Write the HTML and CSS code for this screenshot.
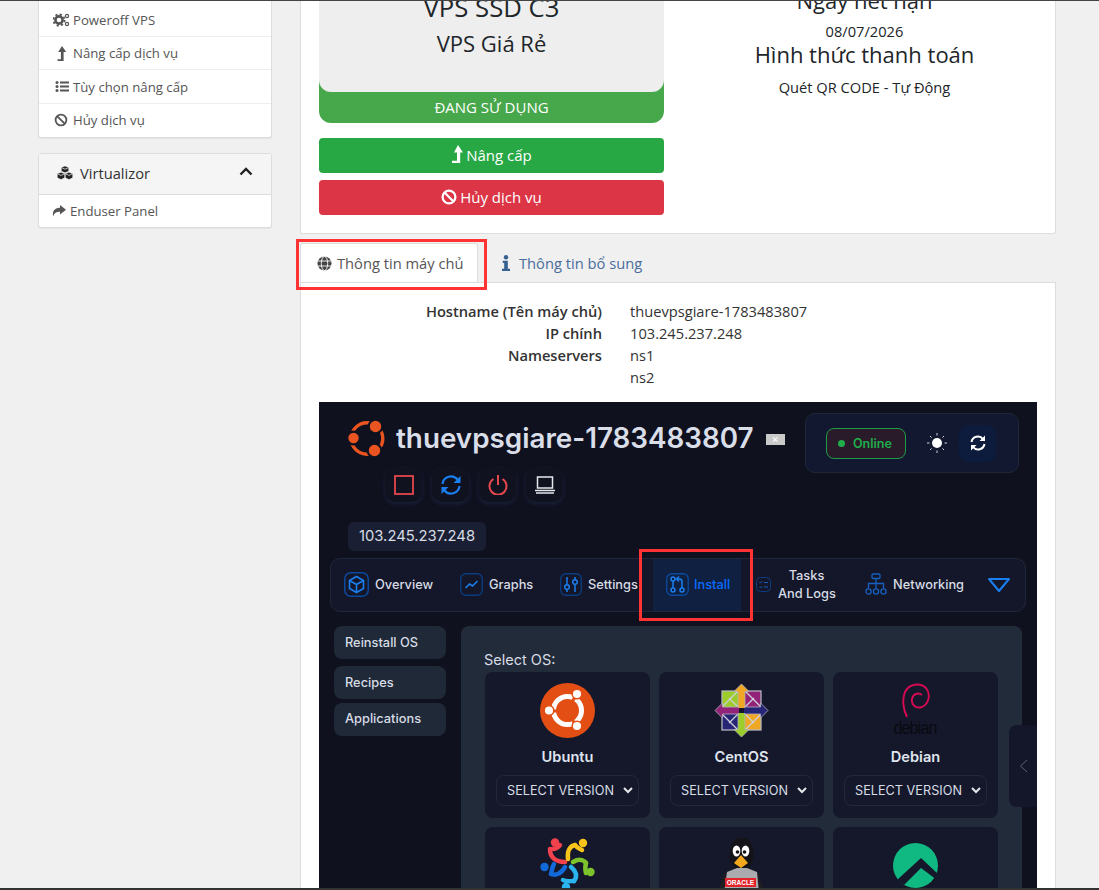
FILE: index.html
```html
<!DOCTYPE html>
<html lang="vi">
<head>
<meta charset="utf-8">
<title>VPS</title>
<link rel="stylesheet" href="styles.css">
</head>
<body>
<div class="topline"></div>
<div class="page">
  <aside class="side">
    <ul class="box list">
      <li class="row-first"><svg class="ico" width="17" height="14" viewBox="0 0 17 14"><circle cx="6" cy="7" r="3.600" fill="none" stroke="#555" stroke-width="2.600"/><circle cx="6" cy="7" r="5.600" fill="none" stroke="#555" stroke-width="1.800" stroke-dasharray="2.200 2.200"/><circle cx="14" cy="3" r="1.600" fill="none" stroke="#555" stroke-width="1.200"/><circle cx="14" cy="11" r="1.600" fill="none" stroke="#555" stroke-width="1.200"/></svg>Poweroff VPS</li>
      <li><svg class="ico" width="17" height="15" viewBox="0 0 17 15"><path d="M9 0l4.200 6h-2.600v9H4.500v-1.800h3.400V6H5.200z" fill="#555"/></svg>Nâng cấp dịch vụ</li>
      <li><svg class="ico" width="17" height="13" viewBox="0 0 17 13"><g fill="#555"><circle cx="4" cy="2.500" r="1.500"/><circle cx="4" cy="6.500" r="1.500"/><circle cx="4" cy="10.500" r="1.500"/><rect x="7" y="1.500" width="9" height="2"/><rect x="7" y="5.500" width="9" height="2"/><rect x="7" y="9.500" width="9" height="2"/></g></svg>Tùy chọn nâng cấp</li>
      <li><svg class="ico" width="17" height="14" viewBox="0 0 17 14"><circle cx="8" cy="7" r="5.400" fill="none" stroke="#555" stroke-width="1.800"/><path d="M4.300 3.300l7.400 7.400" stroke="#555" stroke-width="1.800"/></svg>Hủy dịch vụ</li>
    </ul>
    <section class="box virt">
      <header class="virt-head">
        <svg class="cubes" width="16" height="14" viewBox="0 0 16 14"><g fill="#222" stroke="#f5f5f5" stroke-width=".5"><path d="M8 0l3.700 1.500v3.700L8 6.800 4.300 5.200V1.500z"/><path d="M4 6.200l3.700 1.600v4L4 13.600.3 11.800v-4z"/><path d="M12 6.200l3.700 1.600v4L12 13.600l-3.700-1.800v-4z"/></g><path d="M4.800 1.800L8 3.200l3.200-1.400M.8 8L4 9.400 7.200 8M8.800 8l3.200 1.400L15.200 8" fill="none" stroke="#f5f5f5" stroke-width=".7"/></svg>
        <span class="virt-title">Virtualizor</span>
        <svg class="chev-up" width="14" height="9" viewBox="0 0 14 9"><path d="M1.500 7.500L7 2l5.500 5.500" fill="none" stroke="#222" stroke-width="2.400"/></svg>
      </header>
      <div class="virt-row"><svg class="share" width="14" height="12" viewBox="0 0 14 12"><path d="M8 0l6 4.800-6 4.800V6.800C4.500 6.800 2.200 7.600 1.300 11.500 0 7 2 3 8 2.800z" fill="#555"/></svg>Enduser Panel</div>
    </section>
  </aside>

  <main class="main">
    <section class="card">
      <div class="col-left">
        <div class="plan">
          <div class="plan-name">VPS SSD C3</div>
          <div class="plan-group">VPS Giá Rẻ</div>
        </div>
        <div class="plan-status">ĐANG SỬ DỤNG</div>
        <button class="btn btn-green"><svg width="12" height="19" viewBox="0 0 12 19"><path d="M7 0l5 7.500H9.200V18H1v-2.200h5V7.500H3z" fill="#fff"/></svg>Nâng cấp</button>
        <button class="btn btn-red"><svg width="16" height="16" viewBox="0 0 16 16"><circle cx="8" cy="8" r="6.400" fill="none" stroke="#fff" stroke-width="2.300"/><path d="M3.500 3.500l9 9" stroke="#fff" stroke-width="2.300"/></svg>Hủy dịch vụ</button>
      </div>
      <div class="col-right">
        <div class="big exp-label">Ngày hết hạn</div>
        <div class="small exp-date">08/07/2026</div>
        <div class="big pay-label">Hình thức thanh toán</div>
        <div class="small pay-value">Quét QR CODE - Tự Động</div>
      </div>
    </section>

    <nav class="tabs">
      <div class="tab active"><svg width="15" height="15" viewBox="0 0 15 15"><circle cx="7.500" cy="7.500" r="7" fill="#444"/><g fill="none" stroke="#fff" stroke-width=".9"><ellipse cx="7.500" cy="7.500" rx="3.200" ry="7"/><path d="M.5 5h14M.5 10h14"/></g></svg>Thông tin máy chủ</div>
      <div class="tab other"><svg width="8" height="16" viewBox="0 0 8 16"><g fill="#35608f"><circle cx="4" cy="2.200" r="2.200"/><path d="M.8 5.800h5v8H8V16H0v-2.200h2.200V8H.8z"/></g></svg>Thông tin bổ sung</div>
      <div class="mark mark-tab"></div>
    </nav>

    <section class="content">
      <dl class="info">
        <dt>Hostname (Tên máy chủ)</dt><dd>thuevpsgiare-1783483807</dd>
        <dt>IP chính</dt><dd>103.245.237.248</dd>
        <dt>Nameservers</dt><dd>ns1</dd>
        <dt></dt><dd>ns2</dd>
      </dl>

      <div class="shot">
        <div class="shot-head">
          <div class="shot-left">
            <div class="title-row">
              <svg width="37" height="37" viewBox="0 0 37 37"><circle cx="19" cy="18.500" r="15.800" fill="none" stroke="#e95420" stroke-width="3.400"/><g fill="#e95420" stroke="#10111f" stroke-width="2.200"><circle cx="5.500" cy="18" r="6.300"/><circle cx="27.500" cy="6.500" r="6.800"/><circle cx="26.500" cy="30.500" r="6.800"/></g></svg>
              <span class="host">thuevpsgiare-1783483807</span>
              <span class="broken">×</span>
            </div>
            <div class="actions">
              <div class="act"><svg width="20" height="20" viewBox="0 0 20 20"><rect x="1" y="1" width="18" height="18" fill="none" stroke="#e5484d" stroke-width="1.800"/></svg></div>
              <div class="act"><svg width="22" height="20" viewBox="0 0 22 20"><g fill="none" stroke="#1a7ff0" stroke-width="2.200"><path d="M2.500 9A8.500 8.500 0 0 1 17.500 4.500L19 6"/><path d="M19.500 11A8.500 8.500 0 0 1 4.500 15.500L3 14"/></g><path d="M20.500 1v7h-7zM1.500 19v-7h7z" fill="#1a7ff0"/></svg></div>
              <div class="act"><svg width="20" height="20" viewBox="0 0 20 20"><g fill="none" stroke="#e5484d" stroke-width="2"><path d="M5.500 4A8.500 8.500 0 1 0 14.500 4"/><path d="M10 0v10"/></g></svg></div>
              <div class="act"><svg width="20" height="18" viewBox="0 0 20 18"><g fill="none" stroke="#e6e8ee" stroke-width="1.500"><rect x="2.500" y="1" width="15" height="11"/><path d="M0 14.500h20"/><path d="M1 17h18"/></g></svg></div>
            </div>
            <div class="ip-chip">103.245.237.248</div>
          </div>
          <div class="status">
            <div class="pill"><i class="dot"></i>Online</div>
            <svg class="sun" width="20" height="20" viewBox="0 0 20 20"><circle cx="10" cy="10" r="5" fill="#fff"/><path d="M10 0v2.500M10 17.500V20M0 10h2.500M17.500 10H20M3 3l1.600 1.600M15.400 15.400L17 17M3 17l1.600-1.600M15.400 4.600L17 3" stroke="#cfd3da" stroke-width="1"/></svg>
            <div class="refresh"><svg width="16" height="16" viewBox="0 0 16 16"><g fill="none" stroke="#fff" stroke-width="2"><path d="M1.500 7A6.500 6.500 0 0 1 13 4"/><path d="M14.500 9A6.500 6.500 0 0 1 3 12"/></g><path d="M15 .5V6H9.500zM1 15.500V10h5.500z" fill="#fff"/></svg></div>
          </div>
        </div>

        <div class="nav">
          <div class="nav-item first"><svg width="25" height="25" viewBox="0 0 25 25"><rect x=".75" y=".75" width="23.500" height="23.500" rx="6" fill="none" stroke="#0b4a9e" stroke-width="1.500"/><g fill="none" stroke="#1a7ff0" stroke-width="1.600"><path d="M12.500 4.500l7 4v8l-7 4-7-4v-8z"/><path d="M5.500 8.500l7 4 7-4M12.500 12.500v8"/></g></svg>Overview</div>
          <div class="nav-item"><svg width="23" height="23" viewBox="0 0 23 23"><rect x=".75" y=".75" width="21.500" height="21.500" rx="5" fill="none" stroke="#0b3d82" stroke-width="1.300"/><path d="M5.500 15l4-4 3 2 5-5" fill="none" stroke="#1a7ff0" stroke-width="1.600"/></svg>Graphs</div>
          <div class="nav-item"><svg width="22" height="23" viewBox="0 0 22 23"><rect x=".75" y=".75" width="20.500" height="21.500" rx="5" fill="none" stroke="#0b3d82" stroke-width="1.300"/><g fill="none" stroke="#1a7ff0" stroke-width="1.500"><circle cx="7" cy="14" r="2.300"/><circle cx="15" cy="9" r="2.300"/><path d="M7 4v7.500M7 16.500V19M15 4v2.500M15 11.500V19"/></g></svg>Settings</div>
          <div class="nav-item on"><svg width="23" height="23" viewBox="0 0 23 23"><rect x=".75" y=".75" width="21.500" height="21.500" rx="5" fill="none" stroke="#0b4a9e" stroke-width="1.300"/><g fill="none" stroke="#1a7ff0" stroke-width="1.500"><circle cx="7" cy="6" r="2"/><circle cx="7" cy="17" r="2"/><circle cx="16" cy="17" r="2"/><path d="M7 8v7M16 15V8.500A2.500 2.500 0 0 0 13.500 6H11"/><path d="M13 3.500L10.500 6 13 8.500"/></g></svg>Install</div>
          <div class="nav-item tasks"><svg width="15" height="15" viewBox="0 0 15 15"><rect x=".5" y=".5" width="14" height="14" rx="4" fill="none" stroke="#0b3d82"/><path d="M3.500 5l1 1 1.500-1.800M3.500 10l1 1 1.500-1.800M8 5.500h4M8 10h4" fill="none" stroke="#1560c0" stroke-width="1"/></svg><span class="tasks-label">Tasks<br>And Logs</span></div>
          <div class="nav-item"><svg width="22" height="23" viewBox="0 0 22 23"><g fill="none" stroke="#1560c0" stroke-width="1.300"><rect x="7" y="1" width="8" height="4.500" rx="1"/><path d="M11 5.500V13M3.500 15.500V10.500h15v5M11 13v2.500"/><circle cx="3.500" cy="18.500" r="2.600"/><circle cx="11" cy="18.500" r="2.600"/><circle cx="18.500" cy="18.500" r="2.600"/></g></svg>Networking</div>
          <div class="nav-more"><svg width="24" height="16" viewBox="0 0 24 16"><path d="M2 2h20l-10 12z" fill="none" stroke="#1a7ff0" stroke-width="2" stroke-linejoin="round"/></svg></div>
          <div class="mark mark-install"></div>
        </div>

        <div class="body-row">
          <div class="side-tabs">
            <div class="stab">Reinstall OS</div>
            <div class="stab gap-big">Recipes</div>
            <div class="stab stab-last">Applications</div>
          </div>
          <div class="os-panel">
            <div class="os-label">Select OS:</div>
            <div class="os-grid">
              <div class="os-card">
                <svg class="os-logo" width="55" height="55" viewBox="0 0 55 55"><circle cx="27.500" cy="27.500" r="27.500" fill="#e24e14"/><circle cx="27.500" cy="27.500" r="14" fill="none" stroke="#fff" stroke-width="5"/><g stroke="#e24e14" stroke-width="3"><path d="M20 28H4M31 21l9-16M31 34l9 16"/></g><g fill="#fff" stroke="#e24e14" stroke-width="1.500"><circle cx="9" cy="27.500" r="4.800"/><circle cx="37" cy="11" r="4.800"/><circle cx="37" cy="43" r="4.800"/></g></svg>
                <div class="os-name">Ubuntu</div>
                <div class="os-select">SELECT VERSION<svg width="10" height="7" viewBox="0 0 10 7"><path d="M1 1l4 4 4-4" fill="none" stroke="#e5e7eb" stroke-width="2"/></svg></div>
              </div>
              <div class="os-card">
                <svg class="os-logo" width="55" height="55" viewBox="0 0 55 55"><path d="M8 8h19.500v19.500H8z" fill="#9ccd2a"/><path d="M27.500 8H47v19.500H27.500z" fill="#932279"/><path d="M8 27.500h19.500V47H8z" fill="#262577"/><path d="M27.500 27.500H47V47H27.500z" fill="#efa724"/><rect x="8" y="8" width="39" height="39" fill="none" stroke="#b3b5bd" stroke-width="1.300"/><g stroke="#cfd0d6" stroke-width="1.300"><path d="M7 25l18-18M30 7l18 18M48 30L30 48M25 48L7 30"/><path d="M27.500 27.500L15 15M27.500 27.500L40 15M27.500 27.500L40 40M27.500 27.500L15 40"/></g><g stroke="#b3b5bd" stroke-width=".8"><path d="M27.500 1l7.500 7.500h-4V24l-3.500 3.500L24 24V8.500h-4z" fill="#efa724"/><path d="M54 27.500L46.500 35v-4H31l-3.500-3.500L31 24h15.500v-4z" fill="#262577"/><path d="M27.500 54L20 46.500h4V31l3.500-3.500L31 31v15.500h4z" fill="#9ccd2a"/><path d="M1 27.500L8.500 20v4H24l3.500 3.500L24 31H8.500v4z" fill="#932279"/></g><rect x="25" y="25" width="5" height="5" fill="#15182b"/></svg>
                <div class="os-name">CentOS</div>
                <div class="os-select">SELECT VERSION<svg width="10" height="7" viewBox="0 0 10 7"><path d="M1 1l4 4 4-4" fill="none" stroke="#e5e7eb" stroke-width="2"/></svg></div>
              </div>
              <div class="os-card">
                <div class="deb">
                  <svg width="28" height="36" viewBox="0 0 28 36"><path d="M5 34C1 26 0 16 3 9 7 1 18-1 24 5c5 6 3 16-4 19-6 2-11-2-10-8 1-5 6-7 10-4" fill="none" stroke="#d70a53" stroke-width="1.900"/></svg>
                  <span class="deb-word">debian</span>
                </div>
                <div class="os-name">Debian</div>
                <div class="os-select">SELECT VERSION<svg width="10" height="7" viewBox="0 0 10 7"><path d="M1 1l4 4 4-4" fill="none" stroke="#e5e7eb" stroke-width="2"/></svg></div>
              </div>
              <div class="os-card">
                <svg class="os-logo" width="55" height="55" viewBox="0 0 55 55"><g fill="none" stroke-width="4.500" stroke-linecap="round"><path d="M10 11c0 9 6 13 15 13" stroke="#f0414c"/><path d="M12 11c4 0 6-1 8-4" stroke="#f0414c"/><path d="M28 21c-1-8 2-13 7-14" stroke="#f9c41a"/><path d="M35 7c2 3 5 4 7 5" stroke="#f9c41a"/><path d="M33 24c5-3 10-3 13 1" stroke="#7cc32c"/><path d="M46 25c-1 4-1 7 0 10" stroke="#7cc32c"/><path d="M31 29c5 4 7 9 3 14" stroke="#2bb5ee"/><path d="M34 43c-4 0-8 1-11-1" stroke="#2bb5ee"/><path d="M25 29c-3 6-9 9-14 7" stroke="#1269d9"/><path d="M11 36c1-3 1-7 3-10" stroke="#1269d9"/></g><circle cx="15" cy="4.500" r="4.200" fill="#f0414c"/><circle cx="43" cy="5" r="4.200" fill="#f9c41a"/><circle cx="50.500" cy="34" r="4.200" fill="#7cc32c"/><circle cx="26" cy="49" r="4.200" fill="#2bb5ee"/><circle cx="4.500" cy="29" r="4.200" fill="#1269d9"/></svg>
              </div>
              <div class="os-card">
                <svg class="os-logo" width="55" height="55" viewBox="0 0 55 55"><path d="M3 55l7-19 10-4h16l9 4 6 19z" fill="#1d1d22"/><ellipse cx="27.500" cy="16" rx="12" ry="17" fill="#141418"/><path d="M10 55l3-21 10-4h10l10 4 2 21z" fill="#a9abaf"/><ellipse cx="22.500" cy="13" rx="3.800" ry="5.500" fill="#fff"/><ellipse cx="31.500" cy="13" rx="3.800" ry="5.500" fill="#fff"/><circle cx="23.500" cy="14" r="1.800" fill="#111"/><circle cx="30.500" cy="14" r="1.800" fill="#111"/><path d="M27 17l7 8-7 5-7-5z" fill="#f4a91c"/><rect x="11" y="40" width="31" height="9" fill="#e2232a"/><text x="26.500" y="47" class="oracle" text-anchor="middle">ORACLE</text></svg>
              </div>
              <div class="os-card">
                <svg class="os-logo" width="55" height="55" viewBox="0 0 55 55"><circle cx="27.500" cy="27.500" r="22.500" fill="#10b981"/><path d="M9 42L33 20l16.500 15.500-2.500 5L33 30 16 47z" fill="#15182b"/></svg>
              </div>
            </div>
          </div>
        </div>
        <div class="handle"><svg width="9" height="14" viewBox="0 0 9 14"><path d="M8 1L1.500 7 8 13" fill="none" stroke="#5b6275" stroke-width="1"/></svg></div>
      </div>
    </section>
  </main>
</div>
<div class="botline"></div>
</body>
</html>
```

FILE: styles.css
```css
* { box-sizing: border-box; }
html, body { margin: 0; padding: 0; }
body {
  width: 1099px;
  height: 890px;
  overflow: hidden;
  background: #f0f0f0;
  font-family: "Open Sans", "Liberation Sans", sans-serif;
  font-size: 14.67px;
  color: #212529;
}
.topline { height: 1px; background: #444; }
.botline { height: 2px; background: #333; }
.page { display: flex; height: 887px; overflow: hidden; }

/* sidebar */
.side { width: 300px; padding-left: 38px; flex: none; }
.box {
  width: 234px;
  background: #fff;
  border: 1px solid #ddd;
  border-radius: 0 0 3px 3px;
  box-shadow: 0 1px 1px rgba(0,0,0,.05);
}
.list { list-style: none; margin: 0; padding: 0; border-top: 0; color: #555; font-size: 13.2px; }
.list li {
  height: 33.4px;
  padding-left: 14px;
  display: flex;
  align-items: center;
  border-bottom: 1px solid #eee;
}
.list .row-first { height: 36px; padding-top: 3px; }
.list li:last-child { border-bottom: 0; }
.ico { margin-right: 3px; flex: none; }
.virt { margin-top: 15px; border-radius: 3px; }
.virt-head {
  height: 41px;
  background: #f5f5f5;
  border-bottom: 1px solid #ddd;
  display: flex;
  align-items: center;
  padding: 0 0 2px 18px;
  font-size: 14.7px;
  color: #333;
}
.cubes { margin-right: 7px; }
.virt-title { flex: 1; }
.chev-up { margin-right: 18px; margin-top: -3px; }
.virt-row { height: 32px; display: flex; align-items: center; padding: 0 0 1px 13px; color: #555; font-size: 13.2px; }
.share { margin-right: 4px; }

/* main */
.main { width: 756px; flex: none; }
.card {
  height: 233px;
  background: #fff;
  border: 1px solid #ddd;
  border-top: 0;
  border-radius: 0 0 3px 3px;
  display: flex;
  padding-left: 18px;
}
.col-left { width: 345px; flex: none; }
.plan {
  display: flow-root;
  height: 91px;
  background: #eee;
  border-radius: 0 0 12px 12px;
  text-align: center;
  position: relative;
  z-index: 1;
}
.plan-name { font-size: 25.7px; line-height: 30px; margin-top: -8px; }
.plan-group { font-size: 22px; line-height: 28px; margin-top: 6px; }
.plan-status {
  height: 43px;
  margin-top: -12px;
  padding-top: 12px;
  background: #47a74b;
  border-radius: 0 0 12px 12px;
  color: #fff;
  text-align: center;
  line-height: 31px;
  font-size: 15px;
}
.btn {
  display: flex;
  align-items: center;
  justify-content: center;
  gap: 3px;
  width: 100%;
  height: 35px;
  border: 0;
  border-radius: 4px;
  color: #fff;
  font: 15px "Open Sans", "Liberation Sans", sans-serif;
  padding: 0 0 2px;
}
.btn-green { background: #28a745; margin-top: 15px; }
.btn-red { background: #dc3545; margin-top: 7px; }
.col-right { flex: 1; text-align: center; padding-left: 10px; }
.big { font-size: 22px; line-height: 30px; white-space: nowrap; }
.small { line-height: 22px; }
.exp-label { margin-top: -16px; }
.exp-date { margin-top: 5px; }
.pay-label { margin-top: -3px; }
.pay-value { margin-top: 7px; }

/* tabs */
.tabs { display: flex; height: 48px; padding-top: 9px; position: relative; }
.tab { display: flex; align-items: center; gap: 5px; height: 39px; font-size: 14.7px; }
.active {
  width: 178px;
  padding-left: 16px;
  background: #fff;
  border: 1px solid #ddd;
  border-bottom: 0;
  border-radius: 3px 3px 0 0;
  color: #555;
}
.other { margin-left: 24px; gap: 9px; color: #4a6d9c; }
.mark { position: absolute; border: 3px solid #ff3333; pointer-events: none; }
.mark-tab { left: -4px; top: 5px; width: 191px; height: 51px; }

/* content */
.content { background: #fff; border: 1px solid #ddd; border-bottom: 0; height: 620px; padding: 17px 18px 0 18px; }
.info {
  display: grid;
  grid-template-columns: 283px 1fr;
  column-gap: 28px;
  margin: 0 0 14px;
  line-height: 22px;
}
.info dt { text-align: right; font-weight: 600; color: #333; min-height: 22px; }
.info dd { margin: 0; color: #333; }

/* embedded screenshot */
.shot {
  width: 718px;
  height: 500px;
  background: #10111f;
  position: relative;
  overflow: hidden;
  font-family: Inter, "Liberation Sans", sans-serif;
  color: #d7dce5;
}
.shot-head { display: flex; justify-content: space-between; padding-right: 18px; }
.shot-left { padding: 18px 0 0 29px; }
.title-row { display: flex; align-items: center; height: 36px; }
.host { font-size: 27.8px; font-weight: 600; margin-left: 11px; color: #d9dee8; white-space: nowrap; }
.broken {
  width: 19px;
  height: 11px;
  margin: 2px 0 0 12px;
  background: #c9c9c9;
  color: #fff;
  font-size: 11px;
  line-height: 11px;
  text-align: center;
}
.actions { display: flex; gap: 10px; margin: 11px 0 0 37px; }
.act {
  width: 37px;
  height: 35px;
  background: #10121f;
  border-radius: 10px;
  box-shadow: 0 2px 4px rgba(40,60,100,.4);
  display: flex;
  align-items: center;
  justify-content: center;
}
.ip-chip {
  width: 138px;
  height: 29px;
  margin-top: 20px;
  background: #1a1f33;
  border-radius: 6px;
  line-height: 29px;
  text-align: center;
  font-size: 14.8px;
}
.status {
  width: 214px;
  height: 60px;
  margin-top: 11px;
  background: #111830;
  border: 1px solid #1f2638;
  border-radius: 10px;
  display: flex;
  align-items: center;
  padding-left: 20px;
}
.pill {
  width: 80px;
  height: 31px;
  border: 1px solid #1f9d46;
  border-radius: 8px;
  background: #2a1b2a;
  color: #1fae4b;
  font-size: 12.5px;
  font-weight: 600;
  display: flex;
  align-items: center;
  padding-left: 11px;
  gap: 8px;
}
.dot { width: 7px; height: 7px; border-radius: 50%; background: #1fae4b; }
.sun { margin-left: 21px; }
.refresh {
  width: 37px;
  height: 37px;
  margin-left: 12px;
  background: #0d1b3c;
  border-radius: 9px;
  display: flex;
  align-items: center;
  justify-content: center;
}

.nav {
  width: 696px;
  height: 54px;
  margin: 7px 0 0 11px;
  background: #141729;
  border: 1px solid #20273a;
  border-radius: 10px;
  display: grid;
  grid-template-columns: 129px 100px 93px 88px 124px 122px 38px;
  position: relative;
  font-size: 12.8px;
  font-weight: 500;
}
.nav-item { display: flex; align-items: center; gap: 6px; white-space: nowrap; color: #d7dce5; padding-bottom: 1px; }
.first { padding-left: 13px; }
.nav-item.on { padding-left: 13px; background: #102040; color: #0a6cff; gap: 5px; }
.nav-item.tasks { padding-left: 15px; gap: 7px; }
.tasks-label { width: 57px; text-align: center; line-height: 18px; }
.nav-more { display: flex; align-items: center; }
.mark-install { left: 308px; top: -10px; width: 114px; height: 72px; }

.body-row { display: flex; margin-top: 14px; padding-left: 15px; }
.side-tabs { width: 112px; flex: none; }
.stab {
  height: 33px;
  background: #1f2937;
  border-radius: 8px;
  padding-left: 11px;
  line-height: 33px;
  font-size: 12.8px;
  font-weight: 500;
  margin-bottom: 4px;
}
.stab.gap-big { margin-top: 7px; }
.stab-last { line-height: 31px; }
.os-panel {
  width: 561px;
  height: 300px;
  margin-left: 15px;
  background: #222b3a;
  border-radius: 8px;
  padding: 23px 0 0 24px;
}
.os-label { font-size: 14.5px; line-height: 22px; margin-left: -1px; margin-bottom: 1px; }
.os-grid { display: grid; grid-template-columns: repeat(3, 165px); gap: 9px; }
.os-card {
  height: 146px;
  background: #15182b;
  border-radius: 8px;
  padding-top: 11px;
  display: flex;
  flex-direction: column;
  align-items: center;
}
.os-logo { flex: none; display: block; }
.os-name { margin-top: 8px; line-height: 22px; font-size: 14.6px; font-weight: 600; color: #dfe4ee; }
.os-select {
  width: 143px;
  height: 31px;
  margin-top: 7px;
  border: 1px solid #232839;
  border-radius: 8px;
  display: flex;
  align-items: center;
  justify-content: space-between;
  padding: 0 5px 0 10px;
  font-size: 12.7px;
  color: #d7dce5;
  white-space: nowrap;
}
.deb { width: 55px; height: 55px; display: flex; flex-direction: column; align-items: center; }
.deb-word { font: 18px/19px "Liberation Sans", sans-serif; letter-spacing: -1px; color: #0a0a12; transform: scaleX(.9); }
.oracle { font: bold 6.5px "Liberation Sans", sans-serif; fill: #fff; }
.handle {
  position: absolute;
  right: 0;
  top: 323px;
  width: 28px;
  height: 82px;
  background: #141729;
  border-radius: 8px 0 0 8px;
  display: flex;
  align-items: center;
  justify-content: center;
}
```
